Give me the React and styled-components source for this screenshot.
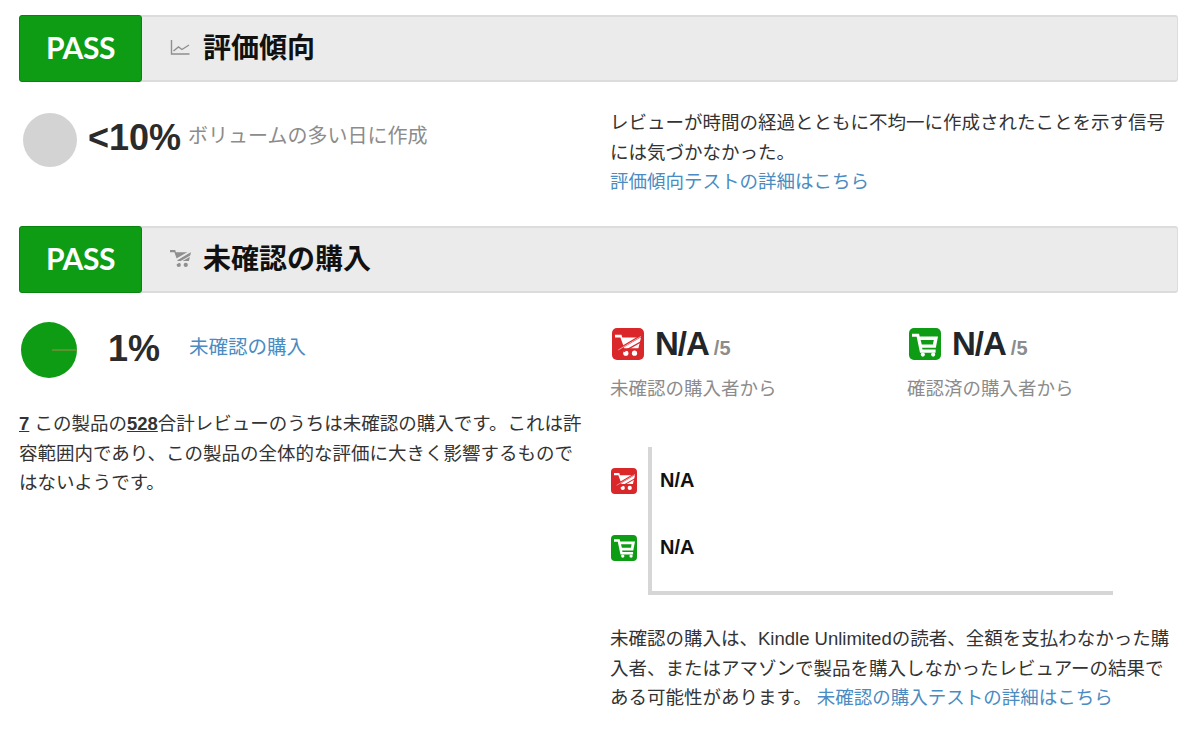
import React from "react";
import styled, { createGlobalStyle } from "styled-components";

const GlobalStyle = createGlobalStyle`
  html, body {
    margin: 0;
    padding: 0;
    background: #fff;
    overflow: hidden;
  }
  body {
    font-family: "Liberation Sans", "Noto Sans CJK JP", sans-serif;
    color: #333;
  }
`;

const Page = styled.div`
  width: 1200px;
  height: 732px;
  box-sizing: border-box;
  padding: 15px 22px 0 19px;
`;

const SectionBar = styled.div`
  display: flex;
  align-items: stretch;
  height: 67px;
  background: #ebebeb;
  border: 1px solid #dcdcdc;
  border-width: 2px 1px 2px 0;
  border-radius: 3px;
  box-sizing: border-box;
`;

const PassBadge = styled.div`
  width: 123px;
  margin: -2px 0;
  padding-bottom: 3px;
  display: flex;
  align-items: center;
  justify-content: center;
  background: #0d9c14;
  border: 1px solid #0a8410;
  border-radius: 3px;
  box-sizing: border-box;
  color: #fff;
  font-family: Lato, "Liberation Sans", sans-serif;
  font-size: 30px;
  font-weight: 700;
  letter-spacing: -0.4px;
`;

const BarTitle = styled.div`
  display: flex;
  align-items: center;
  gap: 12px;
  padding-left: 28px;
  padding-bottom: 5px;
  color: #111;
  font-size: 28px;
  font-weight: 700;
`;

const TopBody = styled.div`
  display: grid;
  grid-template-columns: 592px 1fr;
  height: 144px;
`;

const BottomBody = styled.div`
  display: grid;
  grid-template-columns: 592px 1fr;
`;

const StatRow = styled.div`
  display: flex;
  align-items: flex-start;
  padding-left: ${(p) => p.$indent}px;
  padding-top: ${(p) => p.$top}px;
`;

const GreyDot = styled.div`
  width: 54px;
  height: 54px;
  border-radius: 50%;
  background: #d3d3d3;
  flex-shrink: 0;
`;

const Percent = styled.div`
  font-size: 36px;
  font-weight: 700;
  color: #2b2b2b;
  line-height: 50px;
  margin-left: ${(p) => p.$left}px;
  margin-top: ${(p) => p.$drop || 0}px;
  width: ${(p) => p.$width}px;
  flex-shrink: 0;
`;

const GreyLabel = styled.div`
  font-size: 20px;
  line-height: 28px;
  color: #8c8c8c;
  margin-top: 9px;
`;

const BlueLabel = styled.a`
  font-size: 19.5px;
  line-height: 28px;
  color: #4a8cc2;
  margin-top: 11px;
`;

const Paragraph = styled.p`
  margin: 0;
  font-size: 18.5px;
  line-height: 29.5px;
  color: #333;
  width: ${(p) => p.$width}px;
`;

const Link = styled.a`
  color: #4a8cc2;
`;

const RightText = styled.div`
  padding-top: 26px;
  margin-left: -1px;
`;

const StrongUnderline = styled.span`
  font-weight: 700;
  text-decoration: underline;
`;

const LeftColumn = styled.div`
  display: flex;
  flex-direction: column;
`;

const LeftIntro = styled.div`
  margin-top: 31px;
`;

const RightColumn = styled.div`
  padding-top: 33px;
  margin-left: -1px;
`;

const Ratings = styled.div`
  display: grid;
  grid-template-columns: 297px 1fr;
`;

const RatingTop = styled.div`
  display: flex;
  align-items: center;
  gap: 11px;
  height: 36px;
  padding-left: 2px;
`;

const RatingValue = styled.span`
  font-size: 33px;
  font-weight: 700;
  color: #22262b;
  letter-spacing: -1px;
`;

const RatingMax = styled.span`
  font-size: 20px;
  font-weight: 700;
  color: #8c8c8c;
  margin-left: 5px;
  letter-spacing: 0;
`;

const RatingCaption = styled.div`
  font-size: 18.5px;
  line-height: 28px;
  color: #8c8c8c;
  margin-top: 13px;
`;

const ChartBlock = styled.div`
  margin-top: 44px;
  width: 503px;
`;

const ChartPlot = styled.div`
  height: 144px;
  border-left: 4px solid #d6d6d6;
  border-bottom: 4px solid #d6d6d6;
  margin-left: 38px;
`;

const ChartRows = styled.div`
  margin-left: -42px;
`;

const ChartRow = styled.div`
  display: flex;
  align-items: center;
  height: 67px;
`;

const ChartIconCell = styled.div`
  width: 42px;
  padding-left: 1px;
  box-sizing: border-box;
  display: flex;
  flex-shrink: 0;
`;

const ChartValue = styled.span`
  font-size: 20px;
  font-weight: 700;
  color: #111;
  margin-left: 8px;
`;

const BottomNote = styled(Paragraph)`
  margin-top: 29px;
`;

const IconBox = styled.div`
  width: ${(p) => p.$size}px;
  height: ${(p) => p.$size}px;
  border-radius: ${(p) => Math.round(p.$size / 6)}px;
  background: ${(p) => (p.$tone === "red" ? "#d9272a" : "#0d9c14")};
  display: flex;
  align-items: center;
  justify-content: center;
  flex-shrink: 0;
`;

// filled cart with the two slashes = unverified, open basket = verified
const SlashedCart = ({ size, color, bg, line }) => (
  <svg width={size} height={size} viewBox="0 0 24 24">
    <path d="M0 3.5h6l.7 2.5H24l-2.4 10H8.6L5 6H0z" fill={color} />
    <circle cx="10" cy="20.5" r="2.4" fill={color} />
    <circle cx="18" cy="20.5" r="2.4" fill={color} />
    <path d="M3 17L24 4.5" stroke={bg} strokeWidth="2" />
    <path d="M3 17.5L24 5" stroke={line} strokeWidth="0.8" />
    <path d="M8 19L24 10" stroke={bg} strokeWidth="1.2" />
  </svg>
);

const OpenCart = ({ size, color }) => (
  <svg width={size} height={size} viewBox="0 0 24 24">
    <path
      fillRule="evenodd"
      d="M0 2.5h6.5l.6 2.5H24l-2 10.5H9.3l.4 1.5h12.1v3H7.4L4.3 5.4H0zM8 8.2l1 4.2h10.3l.8-4.2z"
      fill={color}
    />
    <circle cx="10" cy="21.8" r="1.9" fill={color} />
    <circle cx="19.5" cy="21.8" r="1.9" fill={color} />
  </svg>
);

const CartBadge = ({ tone, size }) => {
  const inner = Math.round(size * 0.8);
  return (
    <IconBox $tone={tone} $size={size}>
      {tone === "red" ? (
        <SlashedCart size={inner} color="#fff" bg="#d9272a" line="#f6b6c0" />
      ) : (
        <OpenCart size={inner} color="#fff" />
      )}
    </IconBox>
  );
};

const TrendIcon = () => (
  <svg width="21" height="21" viewBox="0 0 21 21" fill="none" stroke="#8f8f8f" strokeWidth="1.4">
    <path d="M1.5 4v14h18" />
    <path d="M3.5 15l5-4 3.5 2.5 7-4.5" />
  </svg>
);

const PieChart = () => (
  <svg width="56" height="56" viewBox="0 0 56 56">
    <circle cx="28" cy="28" r="28" fill="#0d9c14" />
    <path d="M31 28H56" stroke="#a98a4e" strokeWidth="1" />
  </svg>
);

const Bar = ({ icon, title }) => (
  <SectionBar>
    <PassBadge>PASS</PassBadge>
    <BarTitle>
      {icon}
      <span>{title}</span>
    </BarTitle>
  </SectionBar>
);

export default function App() {
  return (
    <Page>
      <GlobalStyle />
      <Bar icon={<TrendIcon />} title="評価傾向" />
      <TopBody>
        <StatRow $indent={4} $top={31}>
          <GreyDot />
          <Percent $left={11} $width={100}>&lt;10%</Percent>
          <GreyLabel>ボリュームの多い日に作成</GreyLabel>
        </StatRow>
        <RightText>
          <Paragraph $width={560}>
            レビューが時間の経過とともに不均一に作成されたことを示す信号には気づかなかった。
            <br />
            <Link>評価傾向テストの詳細はこちら</Link>
          </Paragraph>
        </RightText>
      </TopBody>
      <Bar
        icon={<SlashedCart size={21} color="#8f8f8f" bg="#ebebeb" line="#ebebeb" />}
        title="未確認の購入"
      />
      <BottomBody>
        <LeftColumn>
          <StatRow $indent={2} $top={29}>
            <PieChart />
            <Percent $left={31} $width={81} $drop={2}>1%</Percent>
            <BlueLabel>未確認の購入</BlueLabel>
          </StatRow>
          <LeftIntro>
            <Paragraph $width={568}>
              <StrongUnderline>7</StrongUnderline> この製品の
              <StrongUnderline>528</StrongUnderline>
              合計レビューのうちは未確認の購入です。これは許容範囲内であり、この製品の全体的な評価に大きく影響するものではないようです。
            </Paragraph>
          </LeftIntro>
        </LeftColumn>
        <RightColumn>
          <Ratings>
            <div>
              <RatingTop>
                <CartBadge tone="red" size={32} />
                <RatingValue>
                  N/A<RatingMax>/5</RatingMax>
                </RatingValue>
              </RatingTop>
              <RatingCaption>未確認の購入者から</RatingCaption>
            </div>
            <div>
              <RatingTop>
                <CartBadge tone="green" size={32} />
                <RatingValue>
                  N/A<RatingMax>/5</RatingMax>
                </RatingValue>
              </RatingTop>
              <RatingCaption>確認済の購入者から</RatingCaption>
            </div>
          </Ratings>
          <ChartBlock>
            <ChartPlot>
              <ChartRows>
                {["red", "green"].map((tone) => (
                  <ChartRow key={tone}>
                    <ChartIconCell>
                      <CartBadge tone={tone} size={26} />
                    </ChartIconCell>
                    <ChartValue>N/A</ChartValue>
                  </ChartRow>
                ))}
              </ChartRows>
            </ChartPlot>
          </ChartBlock>
          <BottomNote $width={562}>
            未確認の購入は、Kindle Unlimitedの読者、全額を支払わなかった購入者、またはアマゾンで製品を購入しなかったレビュアーの結果である可能性があります。{" "}
            <Link>未確認の購入テストの詳細はこちら</Link>
          </BottomNote>
        </RightColumn>
      </BottomBody>
    </Page>
  );
}
